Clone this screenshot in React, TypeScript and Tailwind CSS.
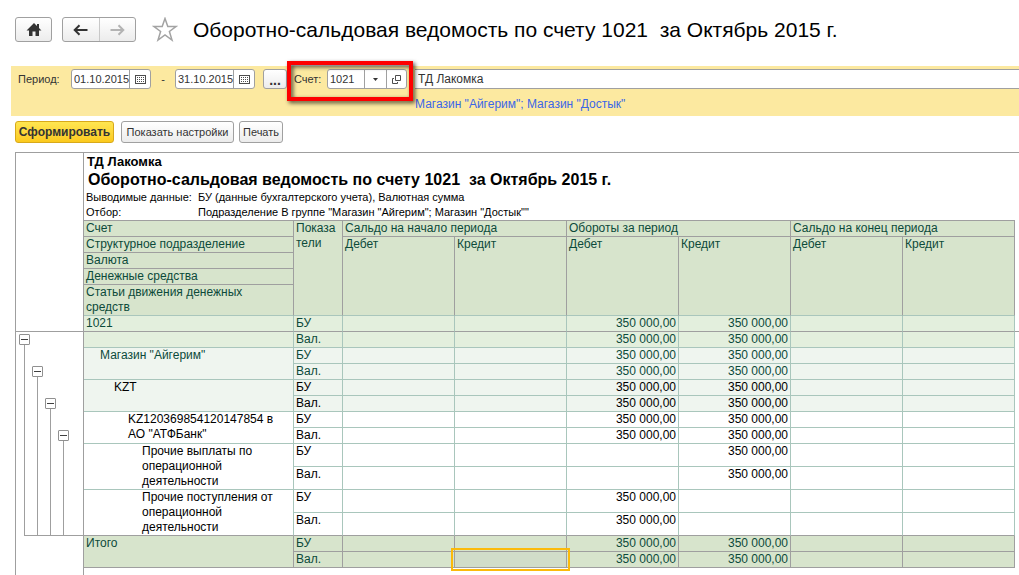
import clsx from "clsx";
import { useState } from "react";
import type { ReactNode } from "react";

type Amounts = [string, string, string, string, string, string];

type Account = {
  label: string;
  indent: string;
  text: string;
  fill: string;
  tall?: boolean;
  amounts: Amounts;
};

const sum = "350 000,00";
const both: Amounts = ["", "", sum, sum, "", ""];
const creditOnly: Amounts = ["", "", "", sum, "", ""];
const debitOnly: Amounts = ["", "", sum, "", "", ""];

const accounts: Account[] = [
  { label: 'Магазин "Айгерим"', indent: "pl-4", text: "text-[#0c4a3a]", fill: "bg-[#eff5ef]", amounts: both },
  { label: "KZT", indent: "pl-[30px]", text: "text-black", fill: "bg-[#eff5ef]", amounts: both },
  { label: 'KZ120369854120147854 в АО "АТФБанк"', indent: "pl-[44px]", text: "text-black", fill: "[&>td]:bg-white", amounts: both },
  { label: "Прочие выплаты по операционной деятельности", indent: "pl-[58px]", text: "text-black", fill: "[&>td]:bg-white", tall: true, amounts: creditOnly },
  { label: "Прочие поступления от операционной деятельности", indent: "pl-[58px]", text: "text-black", fill: "[&>td]:bg-white", tall: true, amounts: debitOnly }
];

const levels = ["pt-0.5", "pt-[34px]", "pt-[66px]", "pt-[98px]"];
const periods = ["Сальдо на начало периода", "Обороты за период", "Сальдо на конец периода"];

const gray = "border-[#9f9f9f]";
const teal = "border-[#a9c6bc]";
const tealOverGray = "border-r-[#a9c6bc] border-b-[#9f9f9f]";
const headBase = "border-r border-b bg-[#d7e4cc] px-0.5 text-left align-top font-normal";
const headCell = `${headBase} border-[#9f9f9f]`;
const headLastCell = `${headBase} border-t-[#9f9f9f] border-r-[#9f9f9f] border-b-[#a9c6bc]`;
const toolButton = "rounded-[3px] border border-[#a0a0a0] bg-linear-to-b from-white to-[#ececec]";
const field = "flex h-5 w-20 items-stretch overflow-hidden rounded-[3px] border border-[#a0a0a0] bg-white";

function CalendarIcon() {
  return (
    <svg width="11" height="9" viewBox="0 0 11 9" shapeRendering="crispEdges" fill="#4d4d4d">
      <path d="M0 0h11v9H0zM1 1v7h9V1z" fillRule="evenodd" />
      <path d="M2 2h1v1H2zM4 2h1v1H4zM6 2h1v1H6zM8 2h1v1H8zM2 4h1v1H2zM4 4h1v1H4zM6 4h1v1H6zM8 4h1v1H8zM2 6h1v1H2zM4 6h1v1H4zM6 6h1v1H6zM8 6h1v1H8z" />
    </svg>
  );
}

function DateField({ label, value }: { label: string; value: string }) {
  return (
    <div className={field}>
      <input aria-label={label} defaultValue={value} className="min-w-0 flex-1 pl-0.5 outline-none" />
      <button type="button" aria-label={`${label}: календарь`} className="grid w-[21px] place-items-center border-l border-[#a0a0a0]">
        <CalendarIcon />
      </button>
    </div>
  );
}

function AmountCells({ values, edge, selected }: { values: Amounts; edge: string; selected?: number }) {
  return values.map((value, index) => (
    <td key={index} className={clsx("border-r border-b pr-0.5 text-right align-top", edge, index === selected && "relative bg-[#d1ddc9]")}>
      {value}
      {index === selected ? <span className="absolute -inset-1 border-2 border-[#fbba0b]" /> : null}
    </td>
  ));
}

function Indicator({ children, edge }: { children: ReactNode; edge: string }) {
  return <td className={clsx("border-r border-b px-0.5 align-top", edge)}>{children}</td>;
}

function Outline() {
  return (
    <div className="w-[67px] shrink-0">
      <div className="h-[179px] border-b border-[#9f9f9f]" />
      <div className="flex h-[203px] pl-[3px]">
        {levels.map((offset, index) => (
          <div key={offset} className={clsx("flex w-[13px] flex-col items-start", offset)}>
            <button
              type="button"
              aria-label={`Свернуть уровень ${index + 1}`}
              className="grid h-[11px] w-[11px] shrink-0 place-items-center rounded-[1px] border border-[#909090] bg-white"
            >
              <span className="h-px w-[7px] bg-[#404040]" />
            </button>
            <span className="ml-[5px] w-px flex-1 bg-[#9f9f9f]" />
          </div>
        ))}
      </div>
      <div className="ml-2 h-px bg-[#9f9f9f]" />
    </div>
  );
}

function ReportTable() {
  return (
    <table className="w-full table-fixed border-separate border-spacing-0 text-[12px] leading-[15px]">
      <colgroup>
        <col className="w-[210px]" />
        <col className="w-[49px]" />
        {[0, 1, 2, 3, 4, 5].map((column) => <col key={column} className="w-[112px]" />)}
        <col />
      </colgroup>
      <thead className="text-[#0c4a3a]">
        <tr className="h-[17px]">
          <th className={clsx(headCell, "border-t")}>Счет</th>
          <th rowSpan={5} className={clsx(headLastCell, "border-t")}>Показа<br />тели</th>
          {periods.map((period) => (
            <th key={period} colSpan={2} className={clsx(headCell, "border-t")}>{period}</th>
          ))}
        </tr>
        <tr className="h-4">
          <th className={headCell}>Структурное подразделение</th>
          {periods.map((period) => ["Дебет", "Кредит"].map((side) => (
            <th key={period + side} rowSpan={4} className={headLastCell}>{side}</th>
          )))}
        </tr>
        <tr className="h-4"><th className={headCell}>Валюта</th></tr>
        <tr className="h-4"><th className={headCell}>Денежные средства</th></tr>
        <tr className="h-[31px]"><th className={headLastCell}>Статьи движения денежных<br />средств</th></tr>
      </thead>
      <tbody className="text-[#0c4a3a]">
        <tr className="h-4 [&>td:not(:last-child)]:bg-[#e3efdd]">
          <td className={clsx("border-r border-b px-0.5", tealOverGray)}>1021</td>
          <Indicator edge={tealOverGray}>БУ</Indicator>
          <AmountCells values={both} edge={tealOverGray} />
          <td className={clsx("border-b", gray)} />
        </tr>
        <tr className="h-4 [&>td]:bg-[#e3efdd]">
          <td className={clsx("border-r border-b", teal)} />
          <Indicator edge={teal}>Вал.</Indicator>
          <AmountCells values={both} edge={teal} />
        </tr>
      </tbody>
      {accounts.map((account, index) => {
        const lastEdge = index === accounts.length - 1 ? tealOverGray : teal;
        const row = clsx(account.tall ? "h-[23px]" : "h-4", account.fill === "bg-[#eff5ef]" ? "[&>td]:bg-[#eff5ef]" : account.fill);
        return (
          <tbody key={account.label} className={account.text}>
            <tr className={row}>
              <td rowSpan={2} className={clsx("border-r border-b pr-0.5 align-top", account.indent, lastEdge)}>{account.label}</td>
              <Indicator edge={teal}>БУ</Indicator>
              <AmountCells values={account.amounts} edge={teal} />
            </tr>
            <tr className={row}>
              <Indicator edge={lastEdge}>Вал.</Indicator>
              <AmountCells values={account.amounts} edge={lastEdge} />
            </tr>
          </tbody>
        );
      })}
      <tfoot className="text-[#0c4a3a]">
        <tr className="h-4 [&>td]:bg-[#d7e4cc]">
          <td rowSpan={2} className={clsx("border-r border-b px-0.5 align-top", gray)}>Итого</td>
          <Indicator edge={gray}>БУ</Indicator>
          <AmountCells values={both} edge={gray} />
        </tr>
        <tr className="h-4 [&>td:not(.relative)]:bg-[#d7e4cc]">
          <Indicator edge={gray}>Вал.</Indicator>
          <AmountCells values={both} edge={gray} selected={1} />
        </tr>
      </tfoot>
    </table>
  );
}

export default function App() {
  const [favorite, setFavorite] = useState(false);

  return (
    <div className="flex min-h-screen flex-col overflow-x-hidden bg-white font-['Liberation_Sans',Arial,sans-serif] text-[#333333]">
      <header className="flex items-center pt-[17px] pl-[15px]">
        <button type="button" aria-label="Домой" className={clsx(toolButton, "grid h-[25px] w-[37px] place-items-center")}>
          <svg width="16" height="13" viewBox="0 0 16 13" fill="#333333">
            <path d="M8 0 0.5 7.5H3V13h3.5V8.5h3V13H13V7.500h2.500L13 5V1h-2v2z" />
          </svg>
        </button>
        <div className={clsx(toolButton, "ml-[10px] flex h-[25px] w-[74px]")}>
          <button type="button" aria-label="Назад" className="grid flex-1 place-items-center border-r border-[#c8c8c8]">
            <svg width="15" height="12" viewBox="0 0 15 12" fill="none" stroke="#333333" strokeWidth="2">
              <path d="M14.5 6H2M6.5 1.200 1.700 6l4.800 4.800" />
            </svg>
          </button>
          <button type="button" aria-label="Вперед" className="grid flex-1 place-items-center">
            <svg width="15" height="12" viewBox="0 0 15 12" fill="none" stroke="#b3b3b3" strokeWidth="2">
              <path d="M0.5 6H13M8.5 1.200 13.300 6l-4.800 4.800" />
            </svg>
          </button>
        </div>
        <button type="button" aria-label="Избранное" aria-pressed={favorite} onClick={() => setFavorite(!favorite)} className="ml-4">
          <svg width="26" height="25" viewBox="0 0 26 25" fill={favorite ? "#fbcc1f" : "white"} stroke="#a3a3a3" strokeWidth="1.5">
            <path d="M13 1.500 15.800 9.500h8.200l-6.600 5 2.600 8.500L13 18l-7 5 2.600-8.500-6.600-5h8.200z" />
          </svg>
        </button>
        <h1 className="ml-[15px] text-[21px] leading-6 whitespace-pre text-black">Оборотно-сальдовая ведомость по счету 1021  за Октябрь 2015 г.</h1>
      </header>

      <section className="mt-6 ml-[11px] bg-[#fce9a0] pt-[3px] pb-1 text-[11px]">
        <div className="flex h-5 items-center">
          <span className="w-[60px] pl-[7px]">Период:</span>
          <DateField label="Начало периода" value="01.10.2015" />
          <span className="w-6 text-center">-</span>
          <DateField label="Конец периода" value="31.10.2015" />
          <button type="button" aria-label="Выбрать период" className={clsx(toolButton, "ml-2 flex h-5 w-6 items-end justify-center text-[14px] leading-4 font-bold")}>
            ...
          </button>
          <div className="relative ml-[7px] flex items-center">
            <label htmlFor="account" className="w-[33px]">Счет:</label>
            <div className={field}>
              <input id="account" defaultValue="1021" className="min-w-0 flex-1 pl-0.5 outline-none" />
              <button type="button" aria-label="Выбрать счет" className="grid w-[22px] place-items-center border-l border-[#a0a0a0]">
                <svg width="5" height="3" viewBox="0 0 5 3" fill="#333333"><path d="M0 0h5L2.5 3z" /></svg>
              </button>
              <button type="button" aria-label="Открыть счет" className="grid w-5 place-items-center border-l border-[#a0a0a0]">
                <svg width="9" height="9" viewBox="0 0 9 9" fill="none" stroke="#4d4d4d">
                  <path d="M3.5 0.5h5v5h-5zM2 3.500H0.5v5h5V7" />
                </svg>
              </button>
            </div>
            <span className="pointer-events-none absolute -top-2 -right-[6px] -bottom-3 -left-[7px] border-4 border-[#fe0000] drop-shadow-[2px_2px_2px_rgba(0,0,0,0.7)]" />
          </div>
          <input
            aria-label="Организация"
            defaultValue="ТД Лакомка"
            className="ml-2 h-5 min-w-0 flex-1 border-y border-[#a0a0a0] bg-white pl-[3px] text-[12px] outline-none"
          />
        </div>
        <a href="#departments" className="mt-[7px] ml-[404px] block text-[12px] leading-4 text-[#3a66e8]">Магазин "Айгерим"; Магазин "Достык"</a>
      </section>

      <div className="mt-[5px] flex items-center pl-[15px] text-[11px]">
        <button type="button" className="h-[22px] w-[99px] rounded-[3px] border border-[#d8a91a] bg-linear-to-b from-[#ffe650] to-[#fbc91c] text-[12px] font-bold">
          Сформировать
        </button>
        <button type="button" className={clsx(toolButton, "ml-[7px] h-[22px] w-[113px]")}>Показать настройки</button>
        <button type="button" className={clsx(toolButton, "ml-[5px] h-[22px] w-[44px]")}>Печать</button>
      </div>

      <main className="mt-[9px] ml-[15px] flex flex-1 border-t border-l border-[#9f9f9f]">
        <Outline />
        <div className="min-w-0 flex-1 border-l border-[#9f9f9f]">
          <div className="pl-0.5 text-black">
            <p className="pl-px text-[13px] leading-[17px] font-bold">ТД Лакомка</p>
            <h2 className="pl-0.5 text-[16px] leading-5 font-bold whitespace-pre">Оборотно-сальдовая ведомость по счету 1021  за Октябрь 2015 г.</h2>
            <dl className="grid grid-cols-[112px_1fr] text-[11px] leading-[15px]">
              <dt>Выводимые данные:</dt>
              <dd>БУ (данные бухгалтерского учета), Валютная сумма</dd>
              <dt>Отбор:</dt>
              <dd>Подразделение В группе "Магазин "Айгерим"; Магазин "Достык""</dd>
            </dl>
          </div>
          <ReportTable />
        </div>
      </main>
    </div>
  );
}
